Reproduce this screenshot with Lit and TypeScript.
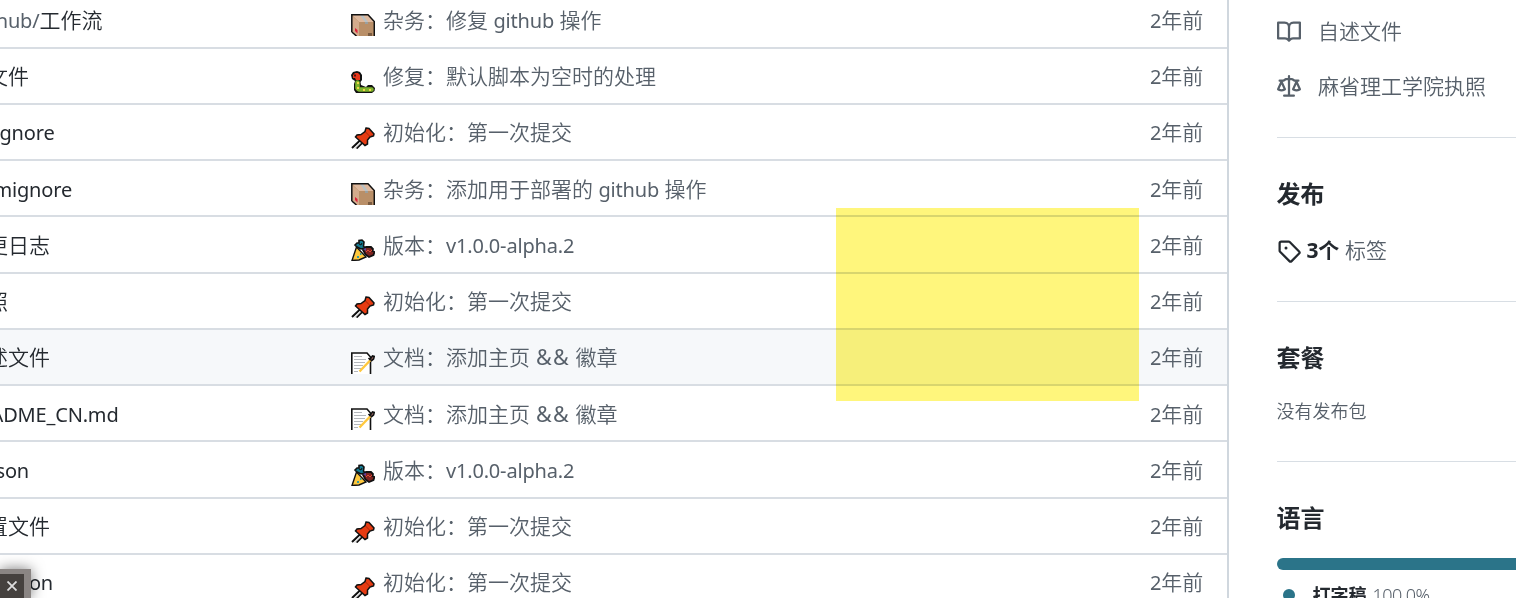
import { LitElement, html, css, svg } from "lit";
import { customElement, property } from "lit/decorators.js";

const icons: Record<string, unknown> = {
  box: svg`<path d="M1 1H17L24 8V22H5L1 18Z" fill="#b98f68"/><path d="M1 1H17L23 8H8Z" fill="#deb99e"/><path d="M1 2L8 8V22H5L1 18Z" fill="#d3ab8c"/><path d="M9 1L14 8H17L12 1Z" fill="#b9c1c4"/><path d="M14 8h3v2h-3z" fill="#9aa0a0"/><path d="M4 14L6.500 16V19.500L4 17Z" fill="#e0203a"/><path d="M17 19h4v3h-4z" fill="#7a5b40"/><path d="M.8 18V.8H17L23.3 7.5V22M.8 18L5.5 22" fill="none" stroke="#111" stroke-width="1.5"/>`,
  bug: svg`<path d="M0 4L2 1L6 0L9 1L11 4V9L9.500 11L10 14L15 16L17 14L21 14L24 17L23.500 20L21 22H5L3 19V13L4 10L1 8Z" fill="#111"/><path d="M2 4L4 2H7L9 4V9H5L4 7H2Z" fill="#e8361a"/><path d="M6.500 11.500V17Q7 18.500 10 18.500H20.500" fill="none" stroke="#7db32b" stroke-width="4.600" stroke-linecap="round"/><path d="M3 3.500h2v2H3z" fill="#501510"/><path d="M6 11h2v2H6zM6 16h2v2H6zM12 18h2v2h-2zM18 18h2v2h-2z" fill="#f1d64a"/>`,
  pin: svg`<path d="M9.500 13L1 21M12 15L5.500 21.500" stroke="#111" stroke-width="2"/><path d="M10 15L3.500 21.500" stroke="#ddd" stroke-width="1.400"/><path d="M15 1L18 1.500L23 7L22.500 9L19 10L16.500 13V17L14 18.500L4.500 10L6 8L10 7.500L14 4.500Z" fill="#e63b12" stroke="#111" stroke-width="1.500"/><path d="M14.500 5L19 9.500" stroke="#a92608"/>`,
  party: svg`<path d="M1 21.500L5.500 8L15 18L8 21Z" fill="#ffc83d" stroke="#111" stroke-width="1.400"/><path d="M4 6L6 4L8 4L8 1.500L11 1L13 3L12.500 7L14 9L10 10L6 8Z" fill="#147a91" stroke="#111" stroke-width="1.600"/><path d="M8 5l2 1 1-2" fill="none" stroke="#111"/><path d="M12 11L15 8L20 8L22 10L21.500 12L23.500 13L22.500 16L18 18L14.500 15.500Z" fill="#7d2420" stroke="#111" stroke-width="1.800"/><path d="M15 13l2-2 2 2 2-2" fill="none" stroke="#e04a35"/><path d="M12 10l3-1v3z" fill="#6840a0"/><path d="M6 17h2v2H6zM9 14h1.500v2H9z" fill="#3a9b9b"/>`,
  memo: svg`<path d="M.8 22V1H16L19.500 5V22" fill="#fff" stroke="#111" stroke-width="1.600"/><path d="M3 4.500h8M3 7.500h12M3 10.500h11M3 13.500h9M3 16.500h7M3 19.500h4" stroke="#b4b7bb" stroke-width="1.100"/><path d="M8.500 19.500L20.500 7" stroke="#ffc83d" stroke-width="2.400"/><path d="M17.500 6L19 7.500L21.500 4L23.200 4.500L22.500 7L20 9" fill="#c8837b" stroke="#111" stroke-width="1.700"/>`,
};

const rows = [
  { dir: "hub/", name: "工作流", edge: 102.5, icon: "box", tag: "杂务", msg: "修复 github 操作" },
  { name: "文件", edge: 29, icon: "bug", tag: "修复", msg: "默认脚本为空时的处理" },
  { name: "ignore", edge: 54.5, icon: "pin", tag: "初始化", msg: "第一次提交" },
  { name: "mignore", edge: 72, icon: "box", tag: "杂务", msg: "添加用于部署的 github 操作" },
  { name: "更日志", edge: 50, icon: "party", tag: "版本", msg: "v1.0.0-alpha.2" },
  { name: "照", edge: 8, icon: "pin", tag: "初始化", msg: "第一次提交" },
  { name: "述文件", edge: 50, icon: "memo", tag: "文档", msg: "添加主页 && 徽章", active: true },
  { name: "ADME_CN.md", edge: 118.5, icon: "memo", tag: "文档", msg: "添加主页 && 徽章" },
  { name: "son", edge: 29, icon: "party", tag: "版本", msg: "v1.0.0-alpha.2" },
  { name: "置文件", edge: 50, icon: "pin", tag: "初始化", msg: "第一次提交" },
  { name: "son", edge: 53, icon: "pin", tag: "初始化", msg: "第一次提交" },
];

const mixed = (text: string) =>
  text.split(/([\x21-\x7e]+)/).map((part) => {
    if (!/^[\x21-\x7e]+$/.test(part)) return part;
    return html`<span class=${part === "&&" ? "latin wide" : "latin"}>${part}</span>`;
  });

@customElement("file-row")
class FileRow extends LitElement {
  @property({ attribute: false }) row: any;
  static styles = css`
    :host { display: grid; grid-template-columns: 351px 1fr 77px; align-items: center; height: 56.25px; box-sizing: border-box; border-bottom: 2px solid #d8dde3; padding-top: 1px; color: #57606a; white-space: pre; }
    :host([active]) { background: #f6f8fa; }
    .name { overflow: hidden; display: flex; justify-content: flex-end; color: #24292f; line-height: 32px; }
    .dir { color: #57606a; }
    .message { display: flex; align-items: center; gap: 8px; line-height: 32px; }
    .emoji { width: 24px; height: 22px; margin-top: 11px; flex: none; }
    .time { line-height: 32px; }
    .latin { font-size: 20px; font-weight: 400; letter-spacing: -0.18px; line-height: 1; }
    .wide { font-size: 21.5px; letter-spacing: 1.3px; margin-left: 0.5px; }
  `;
  render() {
    const r = this.row;
    return html`<div class="name" style="width:${r.edge}px"><span><span class="dir">${mixed(r.dir ?? "")}</span>${mixed(r.name)}</span></div>
      <div class="message"><svg class="emoji" viewBox="0 0 24 22">${icons[r.icon]}</svg><span>${r.tag}：${mixed(r.msg)}</span></div>
      <div class="time">${mixed("2年前")}</div>`;
  }
}

@customElement("app-root")
class AppRoot extends LitElement {
  static styles = css`
    :host { display: grid; grid-template-columns: 1229px 1fr; position: relative; width: 1516px; height: 598px; overflow: hidden; background: #fff; color: #57606a; font: 350 21px/32px "Noto Sans", "Noto Sans CJK SC", sans-serif; }
    .files { height: 598px; box-sizing: border-box; border-right: 2px solid #d0d7de; overflow: hidden; }
    .list { margin-top: -7.75px; }
    .side { padding-left: 48px; white-space: nowrap; }
    .link { display: flex; align-items: center; gap: 17px; height: 56px; }
    .link:first-child { margin-top: 3px; }
    .link span { margin-top: -1px; }
    .link:nth-child(2) span { margin-top: -2px; }
    .octicon { width: 24px; height: 24px; fill: #57606a; flex: none; }
    .book { margin-top: 2px; }
    section { border-top: 1px solid #d8dee4; box-sizing: border-box; padding-top: 38px; }
    .releases { margin-top: 22px; height: 164px; }
    .packages { height: 160px; }
    h2 { margin: 0 0 0 -0.5px; font-size: 24px; line-height: 36px; font-weight: 700; color: #24292f; }
    .tags { display: flex; align-items: center; margin-top: 22px; height: 32px; }
    .tags .octicon { fill: #24292f; margin: 1px 5.5px 0 0; }
    strong { color: #24292f; font-weight: 700; margin-right: 6px; letter-spacing: -0.3px; }
    .none { font-size: 18px; line-height: 28px; margin: 21px 0 0 -0.5px; }
    .bar { height: 12px; border-radius: 6px 0 0 6px; background: #2b7489; margin-top: 22px; }
    .lang { display: flex; align-items: center; font-size: 18px; line-height: 28px; margin-top: 11px; padding-left: 6px; letter-spacing: -0.5px; }
    .lang strong { letter-spacing: 0; }
    .dot { width: 12px; height: 12px; border-radius: 50%; background: #2b7489; margin-right: 17.5px; }
    .highlight { position: absolute; left: 836px; top: 208px; width: 303px; height: 193px; background: #fff67c; mix-blend-mode: multiply; }
    .close { position: absolute; left: 0; top: 569px; width: 31px; height: 29px; box-sizing: border-box; border: solid #8a8583; border-width: 5px 7px 0 0; background: #45413e; box-shadow: 0 0 14px #0008; display: grid; place-items: center; }
    .cross { width: 10px; height: 10px; stroke: #ddd; stroke-width: 1.8; }
  `;
  render() {
    return html`
      <div class="files"><div class="list">${rows.map((r) => html`<file-row .row=${r} ?active=${r.active}></file-row>`)}</div></div>
      <div class="side">
        <div class="link"><svg class="octicon book" viewBox="0 0 16 16"><path fill-rule="evenodd" d="M0 1.750A.75.75 0 01.75 1h4.253c1.227 0 2.317.59 3 1.501A3.744 3.744 0 0111.006 1h4.245a.75.75 0 01.75.75v10.500a.75.75 0 01-.75.75h-4.507a2.250 2.250 0 00-1.591.659l-.622.621a.75.75 0 01-1.060 0l-.622-.621A2.250 2.250 0 005.258 13H.75a.75.75 0 01-.75-.75V1.750zm8.755 3a2.250 2.250 0 012.250-2.250H14.500v9h-3.757c-.71 0-1.400.201-1.992.572l.004-7.322zm-1.504 7.324l.004-5.073-.002-2.253A2.250 2.250 0 005.003 2.500H1.500v9h3.757a3.750 3.750 0 011.994.574z"/></svg><span>自述文件</span></div>
        <div class="link"><svg class="octicon" viewBox="0 0 16 16"><path fill-rule="evenodd" d="M8.750.75a.75.75 0 00-1.500 0V2h-.984c-.305 0-.604.08-.869.23l-1.288.737A.25.25 0 013.984 3H1.750a.75.75 0 000 1.500h.428L.066 9.192a.75.75 0 00.154.838l.53-.53-.53.53v.001l.002.002.002.002.006.006.016.015.045.040a3.514 3.514 0 00.686.450A4.492 4.492 0 003 11c.88 0 1.556-.22 2.023-.454a3.515 3.515 0 00.686-.450l.045-.040.016-.015.006-.006.002-.002.001-.002L5.250 9.500l.53.53a.75.75 0 00.154-.838L3.822 4.500h.162c.305 0 .604-.08.869-.23l1.289-.737a.25.25 0 01.124-.033h.984V13h-2.500a.75.75 0 000 1.500h6.500a.75.75 0 000-1.500h-2.500V3.500h.984a.25.25 0 01.124.033l1.290.736c.264.152.563.231.868.231h.162l-2.112 4.692a.75.75 0 00.154.838l.53-.53-.53.53v.001l.002.002.002.002.006.006.016.015.045.040a3.517 3.517 0 00.686.450A4.492 4.492 0 0013 11c.88 0 1.556-.22 2.023-.454a3.512 3.512 0 00.686-.450l.045-.040.010-.010.006-.005.006-.006.002-.002.001-.002-.529-.531.53.53a.75.75 0 00.154-.838L13.823 4.500h.427a.75.75 0 000-1.500h-2.234a.25.25 0 01-.124-.033l-1.290-.736A1.750 1.750 0 009.735 2H8.750V.75zM1.695 9.227c.285.135.718.273 1.305.273s1.020-.138 1.305-.273L3 6.327l-1.305 2.900zm10 0c.285.135.718.273 1.305.273s1.020-.138 1.305-.273L13 6.327l-1.305 2.900z"/></svg><span>麻省理工学院执照</span></div>
        <section class="releases"><h2>发布</h2>
          <div class="tags"><svg class="octicon" viewBox="0 0 16 16"><path fill-rule="evenodd" d="M2.500 7.775V2.750a.25.25 0 01.25-.25h5.025a.25.25 0 01.177.073l6.250 6.250a.25.25 0 010 .354l-5.025 5.025a.25.25 0 01-.354 0l-6.250-6.250a.25.25 0 01-.073-.177zm-1.500 0V2.750C1 1.784 1.784 1 2.750 1h5.025c.464 0 .91.184 1.238.513l6.250 6.250a1.750 1.750 0 010 2.474l-5.026 5.026a1.750 1.750 0 01-2.474 0l-6.250-6.250A1.750 1.750 0 011 7.775zM6 5a1 1 0 100 2 1 1 0 000-2z"/></svg><strong>3个</strong><span>标签</span></div>
        </section>
        <section class="packages"><h2>套餐</h2><div class="none">没有发布包</div></section>
        <section><h2>语言</h2><div class="bar"></div><div class="lang"><i class="dot"></i><strong>打字稿</strong><span>100.0%</span></div></section>
      </div>
      <div class="highlight"></div>
      <div class="close"><svg class="cross" viewBox="0 0 10 10"><path d="M.5 .5L9.500 9.500M9.500 .5L.5 9.500"/></svg></div>`;
  }
}
